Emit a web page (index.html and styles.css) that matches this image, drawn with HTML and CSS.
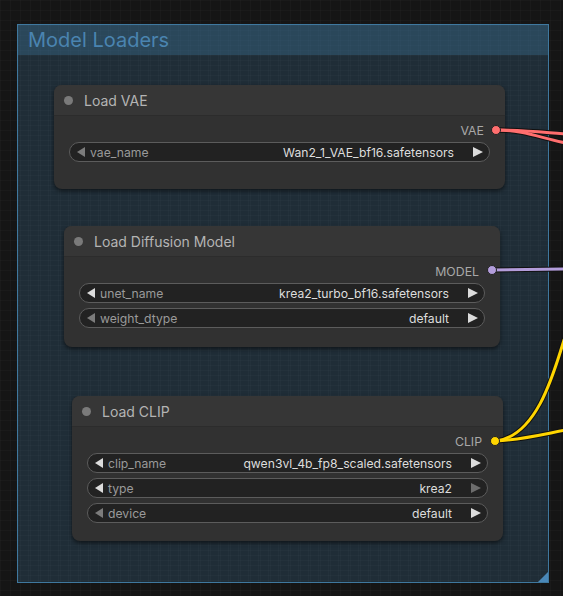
FILE: index.html
```html
<!DOCTYPE html>
<html>
<head>
<meta charset="utf-8">
<link rel="stylesheet" href="styles.css">
</head>
<body>
<div class="canvas">
  <div class="group" style="left:17px;top:24px;width:532px;height:559px">
    <div class="group-title">Model Loaders</div>
    <div class="group-resize"></div>
  </div>

  <div class="node" style="left:54px;top:85px;width:451px;height:104px">
    <div class="node-title"><span class="node-dot"></span>Load VAE</div>
    <div class="node-body">
      <div class="output"><span>VAE</span></div>
      <div class="widgets">
        <div class="widget">
          <span class="arr-l dim"></span><span class="w-label">vae_name</span>
          <span class="w-value">Wan2_1_VAE_bf16.safetensors</span><span class="arr-r"></span>
        </div>
      </div>
    </div>
  </div>

  <div class="node" style="left:64px;top:226px;width:436px;height:121px">
    <div class="node-title"><span class="node-dot"></span>Load Diffusion Model</div>
    <div class="node-body">
      <div class="output"><span>MODEL</span></div>
      <div class="widgets">
        <div class="widget">
          <span class="arr-l"></span><span class="w-label">unet_name</span>
          <span class="w-value">krea2_turbo_bf16.safetensors</span><span class="arr-r"></span>
        </div>
        <div class="widget">
          <span class="arr-l dim"></span><span class="w-label">weight_dtype</span>
          <span class="w-value">default</span><span class="arr-r"></span>
        </div>
      </div>
    </div>
  </div>

  <div class="node" style="left:72px;top:396px;width:431px;height:145px">
    <div class="node-title"><span class="node-dot"></span>Load CLIP</div>
    <div class="node-body">
      <div class="output"><span>CLIP</span></div>
      <div class="widgets">
        <div class="widget">
          <span class="arr-l"></span><span class="w-label">clip_name</span>
          <span class="w-value">qwen3vl_4b_fp8_scaled.safetensors</span><span class="arr-r"></span>
        </div>
        <div class="widget">
          <span class="arr-l"></span><span class="w-label">type</span>
          <span class="w-value">krea2</span><span class="arr-r dim"></span>
        </div>
        <div class="widget">
          <span class="arr-l dim"></span><span class="w-label">device</span>
          <span class="w-value">default</span><span class="arr-r"></span>
        </div>
      </div>
    </div>
  </div>

  <svg class="wires" width="563" height="596" viewBox="0 0 563 596">
    <g fill="none" stroke="#111" stroke-width="5" stroke-linecap="round">
      <path d="M496,130 C525,130 540,132 566,134"/>
      <path d="M496,130 C525,130 540,138 566,143"/>
      <path d="M492,270 L566,269"/>
      <path d="M496,441 C535,436 552,380 564,340"/>
      <path d="M496,441 C520,440 540,435 566,430"/>
    </g>
    <g fill="none" stroke-width="3" stroke-linecap="round">
      <path stroke="#ff6e6e" d="M496,130 C525,130 540,132 566,134"/>
      <path stroke="#ff6e6e" d="M496,130 C525,130 540,138 566,143"/>
      <path stroke="#b39ddb" d="M492,270 L566,269"/>
      <path stroke="#ffd500" d="M496,441 C535,436 552,380 564,340"/>
      <path stroke="#ffd500" d="M496,441 C520,440 540,435 566,430"/>
    </g>
    <circle cx="496" cy="130" r="4.5" fill="#ff6e6e" stroke="#222" stroke-width="1"/>
    <circle cx="492" cy="270" r="4.5" fill="#b39ddb" stroke="#222" stroke-width="1"/>
    <circle cx="495" cy="441" r="4.5" fill="#ffd500" stroke="#222" stroke-width="1"/>
  </svg>
</div>
</body>
</html>
```

FILE: styles.css
```css
html, body {
  margin: 0;
  padding: 0;
  background: #141414;
}

.canvas {
  position: relative;
  width: 563px;
  height: 596px;
  overflow: hidden;
  font-family: Inter, "Liberation Sans", Arial, sans-serif;
  background-color: #151515;
  background-image:
    linear-gradient(to right, rgba(255,255,255,0.02) 1px, transparent 1px),
    linear-gradient(to bottom, rgba(255,255,255,0.02) 1px, transparent 1px);
  background-size: 10px 10px;
}

.group {
  position: absolute;
  box-sizing: border-box;
  border: 1px solid #3f789e;
  background-color: rgba(63, 120, 158, 0.25);
  background-image:
    linear-gradient(to right, rgba(255,255,255,0.018) 1px, transparent 1px),
    linear-gradient(to bottom, rgba(255,255,255,0.018) 1px, transparent 1px);
  background-size: 10px 10px;
}

.group-title {
  height: 30px;
  line-height: 30px;
  padding-left: 10px;
  font-size: 20px;
  color: #4a84b0;
  background: rgba(63, 120, 158, 0.35);
}

.group-resize {
  position: absolute;
  right: 0;
  bottom: 0;
  width: 0;
  height: 0;
  border-left: 10px solid transparent;
  border-bottom: 10px solid #4a88b8;
}

.node {
  position: absolute;
  box-sizing: border-box;
  background: #313131;
  border-radius: 8px;
  box-shadow: 0 2px 4px rgba(0,0,0,0.55);
  overflow: hidden;
}

.node-title {
  height: 31px;
  display: flex;
  align-items: center;
  padding-left: 10px;
  background: #363636;
  border-bottom: 1px solid #2c2c2c;
  box-sizing: border-box;
  font-size: 14px;
  color: #b4b4b4;
}

.node-dot {
  width: 9px;
  height: 9px;
  border-radius: 50%;
  background: #7a7a7a;
  margin-right: 11px;
}

.node-body {
  padding-top: 4px;
}

.output {
  height: 20px;
  display: flex;
  align-items: center;
  justify-content: flex-end;
  padding-right: 21px;
  font-size: 12.3px;
  color: #a8a8a8;
}

.widgets {
  display: flex;
  flex-direction: column;
  gap: 5px;
  margin: 2px 15px 0;
}

.widget {
  height: 20px;
  box-sizing: border-box;
  border: 1px solid #5c5c5c;
  border-radius: 10px;
  background: #222222;
  display: flex;
  align-items: center;
  padding: 0 6px 0 7px;
  font-size: 12.2px;
}

.arr-l {
  width: 0;
  height: 0;
  border-top: 5px solid transparent;
  border-bottom: 5px solid transparent;
  border-right: 8px solid #dcdcdc;
  margin-right: 5px;
}

.arr-r {
  width: 0;
  height: 0;
  border-top: 5px solid transparent;
  border-bottom: 5px solid transparent;
  border-left: 10px solid #dcdcdc;
  margin-left: 19px;
}

.arr-l.dim { border-right-color: #7c7c7c; }
.arr-r.dim { border-left-color: #6c6c6c; }

.w-label {
  color: #9a9a9a;
  flex: 1;
}

.w-value {
  color: #dddddd;
}

.wires {
  position: absolute;
  left: 0;
  top: 0;
  pointer-events: none;
}
```
